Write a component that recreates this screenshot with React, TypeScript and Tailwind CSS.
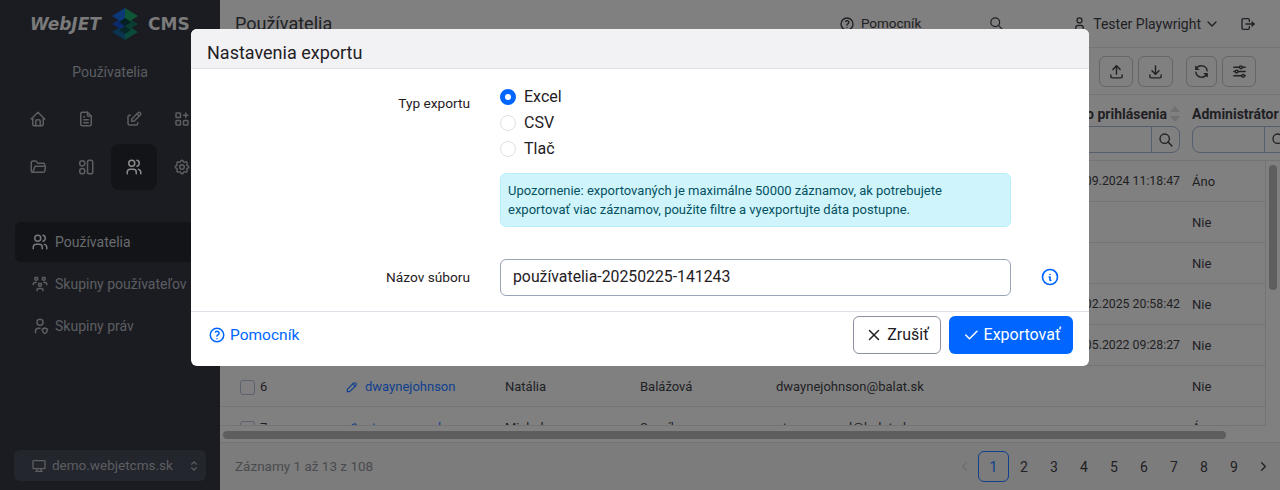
import {
  TbAdjustmentsHorizontal,
  TbApps,
  TbCheck,
  TbChevronDown,
  TbChevronLeft,
  TbChevronRight,
  TbDeviceDesktop,
  TbDownload,
  TbEdit,
  TbFileText,
  TbFolderOpen,
  TbHelp,
  TbHome,
  TbInfoCircle,
  TbLogout,
  TbPencil,
  TbRefresh,
  TbSearch,
  TbSelector,
  TbSettings,
  TbUpload,
  TbUser,
  TbUserShield,
  TbUsers,
  TbUsersGroup,
  TbX,
} from "react-icons/tb";

function LogoCube() {
  return (
    <svg width="28" height="32" viewBox="0 0 28 32" className="shrink-0">
      <path d="M14 16 L27 24 L14 32 Z" fill="#0a4a3c" />
      <path d="M14 16 L1 24 L14 32 Z" fill="#0a3450" />
      <path d="M14 8 L27 16 L14 24 Z" fill="#093d32" />
      <path d="M14 8 L1 16 L14 24 Z" fill="#0a2a6c" />
      <path d="M14 0 L27 8 L14 16 Z" fill="#0f5636" />
      <path d="M14 0 L1 8 L14 16 Z" fill="#0c3878" />
      <path d="M14 10 L20 14 L14 18 L8 14 Z" fill="#061f22" />
      <path d="M14 18 L20 22 L14 26 L8 22 Z" fill="#062826" />
    </svg>
  );
}

function PanelsIcon() {
  return (
    <svg width="18" height="18" viewBox="0 0 24 24" fill="none" stroke="currentColor" strokeWidth="2">
      <circle cx="7" cy="7" r="3.5" />
      <circle cx="7" cy="17.5" r="3.5" />
      <rect x="14" y="3" width="7" height="18" rx="2.5" />
    </svg>
  );
}

function SortArrows() {
  return (
    <svg width="10" height="16" viewBox="0 0 10 16" className="shrink-0 text-[#707070]" fill="currentColor">
      <path d="M5 0 L10 6 L0 6 Z" />
      <path d="M5 16 L10 10 L0 10 Z" />
    </svg>
  );
}

const navIcons = [
  [<TbHome size={18} />, <TbFileText size={18} />, <TbEdit size={18} />, <TbApps size={18} />],
  [<TbFolderOpen size={18} />, <PanelsIcon />, <TbUsers size={18} className="text-[#8c8c8e]" />, <TbSettings size={18} />],
];

const rows = [
  { date: "24.09.2024 11:18:47", admin: "Áno" },
  { date: "", admin: "Nie" },
  { date: "", admin: "Nie" },
  { date: "12.02.2025 20:58:42", admin: "Nie" },
  { date: "18.05.2022 09:28:27", admin: "Nie" },
  { id: "6", login: "dwaynejohnson", first: "Natália", last: "Balážová", mail: "dwaynejohnson@balat.sk", date: "", admin: "Nie" },
  { id: "7", login: "stevenseagal", first: "Michal", last: "Sevcík", mail: "stevenseagal@balat.sk", date: "", admin: "Áno" },
];

export default function App() {
  return (
    <div className="relative flex h-[490px] w-[1280px] overflow-hidden bg-[#808080] font-['Roboto',sans-serif] text-sm text-[#1f2024]">
      <aside className="flex w-[220px] shrink-0 flex-col bg-[#1a1c21] text-[#5d5e62]">
        <div className="flex h-[48px] items-center pl-[30px] font-['DejaVu_Sans',sans-serif] text-[17px] leading-none font-bold text-[#7a7a7a]">
          <span className="w-[74px] italic">WebJET</span>
          <span className="ml-[7px]"><LogoCube /></span>
          <span className="ml-[9px]">CMS</span>
        </div>
        <div className="mt-[14px] text-center text-sm leading-5">Používatelia</div>
        <div className="mt-[14px] flex flex-col gap-[2px] pl-[14px]">
          {navIcons.map((line, i) => (
            <div key={i} className="flex">
              {line.map((icon, j) => (
                <div key={j} className="flex h-[46px] w-[48px] justify-center">
                  <div className={`flex h-[46px] w-[46px] items-center justify-center rounded-lg ${i === 1 && j === 2 ? "bg-[#131417]" : ""}`}>
                    {icon}
                  </div>
                </div>
              ))}
            </div>
          ))}
        </div>
        <nav className="mt-[32px] ml-[15px] flex flex-col">
          <div className="flex h-[40px] items-center gap-[6px] rounded-l-md bg-[#131417] pl-[16px] text-[#6a6b6f]">
            <TbUsers size={18} className="text-[#77787b]" />
            Používatelia
          </div>
          <div className="mt-[2px] flex h-[40px] items-center gap-[6px] pl-[16px] whitespace-nowrap">
            <TbUsersGroup size={18} />
            Skupiny používateľov
          </div>
          <div className="mt-[2px] flex h-[40px] items-center gap-[6px] pl-[16px]">
            <TbUserShield size={18} />
            Skupiny práv
          </div>
        </nav>
        <div className="mt-auto mb-[9px] ml-[14px] flex h-[31px] w-[192px] items-center rounded-md bg-[#23262d] pl-[17px] pr-[5px] text-[13.5px]">
          <TbDeviceDesktop size={16} />
          <span className="ml-[5px] flex-1">demo.webjetcms.sk</span>
          <TbSelector size={14} />
        </div>
      </aside>

      <main className="flex min-w-0 flex-1 flex-col">
        <header className="flex h-[48px] shrink-0 items-center border-b border-[#747474] pl-[15px]">
          <h1 className="text-lg">Používatelia</h1>
          <div className="ml-auto flex items-center">
            <TbHelp size={16} />
            <span className="ml-[6px] text-[13.5px]">Pomocník</span>
            <TbSearch size={15} className="ml-[68px]" />
            <TbUser size={15} className="ml-[68px]" />
            <span className="ml-[6px]">Tester Playwright</span>
            <TbChevronDown size={16} className="ml-[3px]" />
            <TbLogout size={16} className="mr-[24px] ml-[20px]" />
          </div>
        </header>

        <div className="flex h-[47px] shrink-0 items-center justify-end border-b border-[#747474] pr-[24px] text-[#222]">
          <div className="flex h-[31px] w-[34px] items-center justify-center rounded-md border border-[#666]"><TbUpload size={17} /></div>
          <div className="ml-[5px] flex h-[31px] w-[35px] items-center justify-center rounded-md border border-[#666]"><TbDownload size={17} /></div>
          <div className="ml-[13px] flex h-[31px] w-[31px] items-center justify-center rounded-md border border-[#666]"><TbRefresh size={17} /></div>
          <div className="ml-[5px] flex h-[31px] w-[34px] items-center justify-center rounded-md border border-[#666]"><TbAdjustmentsHorizontal size={17} /></div>
        </div>

        <div className="flex h-[66px] shrink-0 overflow-hidden border-b border-[#747474] pt-[8px]">
          <div className="w-[800px] shrink-0" />
          <div className="w-[160px] shrink-0">
            <div className="flex h-[22px] items-center justify-end gap-[3px]">
              <span className="font-bold whitespace-nowrap">Dátum posledného prihlásenia</span>
              <SortArrows />
            </div>
            <div className="mt-[1px] ml-auto flex h-[27px] w-[150px] items-center justify-end rounded-r-lg border border-[#555d6f]">
              <span className="flex h-full w-[28px] items-center justify-center border-l border-[#555d6f]"><TbSearch size={16} /></span>
            </div>
          </div>
          <div className="ml-[12px] flex-1">
            <div className="flex h-[22px] items-center font-bold whitespace-nowrap">Administrátor</div>
            <div className="mt-[1px] flex h-[27px] w-[100px] items-center rounded-l-lg border border-[#555d6f] pl-[71px]">
              <span className="flex h-full items-center border-l border-[#555d6f] pl-[6px]"><TbSearch size={16} /></span>
            </div>
          </div>
        </div>

        <div className="flex h-[266px] shrink-0 flex-col overflow-hidden">
          <div className="h-[265px] w-[1046px] shrink-0 overflow-hidden border-r border-b border-[#747474]">
            {rows.map((r, i) => (
              <div key={i} className="flex h-[41px] shrink-0 items-center border-b border-[#747474] pt-[2px] text-[13px]">
                <div className="flex w-[125px] shrink-0 items-center pl-[20px]">
                  <span className="h-[15px] w-[15px] rounded-[3px] border border-[#5d6270]" />
                  <span className="ml-[5px]">{r.id}</span>
                </div>
                <div className="flex w-[160px] shrink-0 items-center gap-[6px] text-[#0f3f8f]">
                  {r.login && <TbPencil size={14} />}
                  {r.login}
                </div>
                <div className="w-[135px] shrink-0">{r.first}</div>
                <div className="w-[136px] shrink-0">{r.last}</div>
                <div className="w-[244px] shrink-0">{r.mail}</div>
                <div className="w-[160px] shrink-0 text-right text-[12.3px] whitespace-nowrap">{r.date}</div>
                <div className="ml-[12px]">{r.admin}</div>
              </div>
            ))}
          </div>
        </div>

        <div className="flex h-[16px] shrink-0 items-center border-b border-[#747474] pl-[3px]">
          <div className="h-[8px] w-[1003px] rounded-full bg-[#5e5e5e]" />
        </div>

        <footer className="flex h-[47px] shrink-0 items-center bg-[#7c7c7c] pl-[15px] pr-[9px]">
          <span className="pt-[1px] text-[13.5px] text-[#4a4b4e]">Záznamy 1 až 13 z 108</span>
          <div className="ml-auto flex items-center">
            <TbChevronLeft size={15} className="mr-[6px] text-[#6f6f6f]" />
            <span className="flex h-[31px] w-[31px] items-center justify-center rounded-md border border-[#0f3f8f] text-[#0f3f8f]">1</span>
            {[2, 3, 4, 5, 6, 7, 8, 9].map((n) => (
              <span key={n} className="w-[30px] text-center">{n}</span>
            ))}
            <TbChevronRight size={15} className="ml-[7px]" />
          </div>
        </footer>
      </main>

      {/* scrollbar thumb over the table edge */}
      <div className="absolute top-[165px] right-[3px] h-[125px] w-[8px] rounded-full bg-[#5e5e5e]" />

      {/* modal */}
      <div className="absolute top-[29px] left-[191px] flex h-[337px] w-[898px] flex-col overflow-hidden rounded-md bg-white">
        <div className="flex h-[40px] shrink-0 items-center border-b border-[#dde0e7] bg-[#f2f2f4] pt-[8px] pl-[16px] text-lg leading-none">
          Nastavenia exportu
        </div>
        <div className="flex-1 pt-[15px] text-[13.7px]">
          <div className="flex">
            <div className="w-[279px] pt-[10px] text-right">Typ exportu</div>
            <div className="ml-[30px] w-[511px]">
              {["Excel", "CSV", "Tlač"].map((t, i) => (
                <label key={t} className="flex h-[26px] items-center text-base">
                  {i === 0 ? (
                    <span className="h-[16px] w-[16px] rounded-full border-[5px] border-[#0066ff] bg-white" />
                  ) : (
                    <span className="h-[16px] w-[16px] rounded-full border border-[#dfe1e6]" />
                  )}
                  <span className="ml-[8px]">{t}</span>
                </label>
              ))}
              <div className="mt-[11px] h-[54px] rounded-md border border-[#b6effb] bg-[#cff4fc] px-[7px] py-[7px] text-[13px] leading-[19px] text-[#055160]">
                Upozornenie: exportovaných je maximálne 50000 záznamov, ak potrebujete
                <br />
                exportovať viac záznamov, použite filtre a vyexportujte dáta postupne.
              </div>
            </div>
          </div>
          <div className="mt-[32px] flex items-center">
            <div className="w-[279px] text-right">Názov súboru</div>
            <div className="ml-[30px] flex h-[37px] w-[511px] items-center rounded-md border border-[#9aa3b8] pl-[12px] text-[15.8px]">
              používatelia-20250225-141243
            </div>
            <TbInfoCircle size={20} className="mb-[1px] ml-[29px] text-[#0066ff]" />
          </div>
        </div>
        <div className="flex h-[55px] shrink-0 items-start border-t border-[#dde0e7] pt-[4px] pr-[16px] pl-[17px]">
          <div className="flex h-[38px] items-center">
            <TbHelp size={18} className="text-[#0066ff]" />
            <span className="ml-[4px] text-[15.5px] text-[#0066ff]">Pomocník</span>
          </div>
          <button className="ml-auto flex h-[38px] w-[88px] items-center justify-center gap-[4px] rounded-md border border-[#8a90a0] text-base">
            <TbX size={18} />
            Zrušiť
          </button>
          <button className="ml-[8px] flex h-[38px] w-[124px] items-center justify-center gap-[4px] rounded-md bg-[#0066ff] text-base text-white">
            <TbCheck size={18} />
            Exportovať
          </button>
        </div>
      </div>
    </div>
  );
}
